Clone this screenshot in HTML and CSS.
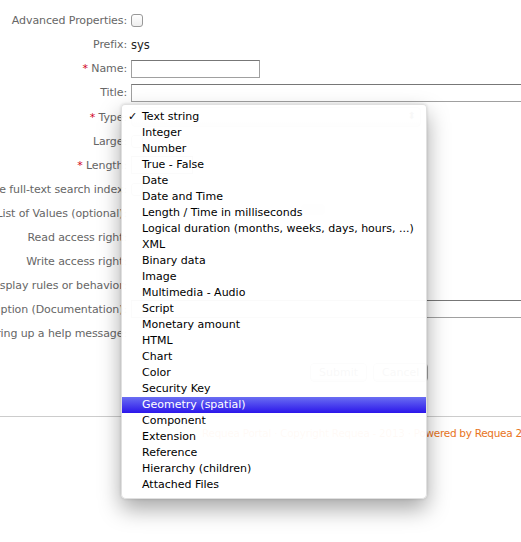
FILE: index.html
```html
<!DOCTYPE html>
<html>
<head>
<meta charset="utf-8">
<link rel="stylesheet" href="styles.css">
</head>
<body>
<div class="page">
  <form class="form">
    <div class="row r-adv"><div class="lbl">Advanced Properties:</div><div class="fld"><span class="check"></span></div></div>
    <div class="row r-prefix"><div class="lbl">Prefix:</div><div class="fld"><span class="val">sys</span></div></div>
    <div class="row r-name"><div class="lbl"><span class="req">*</span>&nbsp;Name:</div><div class="fld"><span class="input name-input"></span></div></div>
    <div class="row r-title"><div class="lbl">Title:</div><div class="fld"><span class="input wide-input"></span></div></div>
    <div class="row"><div class="lbl"><span class="req">*</span>&nbsp;Type:</div><div class="fld"><span class="select"><span class="arrow">⬍</span></span></div></div>
    <div class="row"><div class="lbl">Large:</div><div class="fld"><span class="check"></span></div></div>
    <div class="row"><div class="lbl"><span class="req">*</span>&nbsp;Length:</div><div class="fld"><span class="input short-input"></span></div></div>
    <div class="row"><div class="lbl">Enable full-text search index:</div><div class="fld"><span class="check"></span></div></div>
    <div class="row"><div class="lbl">List of Values (optional):</div><div class="fld"><span class="lov-box"></span></div></div>
    <div class="row"><div class="lbl">Read access right:</div><div class="fld"></div></div>
    <div class="row"><div class="lbl">Write access right:</div><div class="fld"></div></div>
    <div class="row"><div class="lbl">Display rules or behavior:</div><div class="fld"></div></div>
    <div class="row"><div class="lbl">Description (Documentation):</div><div class="fld"><span class="input wide-input"></span></div></div>
    <div class="row"><div class="lbl">Bring up a help message:</div><div class="fld"></div></div>
    <div class="buttons"><span class="btn">Submit</span><span class="btn">Cancel</span></div>
  </form>
  <hr class="rule">
  <div class="footer">Requea Portal · Copyright Requea - 2013 · Powered by Requea 2.4</div>

  <ul class="menu">
    <li><span class="tick">✓</span>Text string</li>
    <li>Integer</li>
    <li>Number</li>
    <li>True - False</li>
    <li>Date</li>
    <li>Date and Time</li>
    <li>Length / Time in milliseconds</li>
    <li>Logical duration (months, weeks, days, hours, ...)</li>
    <li>XML</li>
    <li>Binary data</li>
    <li>Image</li>
    <li>Multimedia - Audio</li>
    <li>Script</li>
    <li>Monetary amount</li>
    <li>HTML</li>
    <li>Chart</li>
    <li>Color</li>
    <li>Security Key</li>
    <li class="active">Geometry (spatial)</li>
    <li>Component</li>
    <li>Extension</li>
    <li>Reference</li>
    <li>Hierarchy (children)</li>
    <li>Attached Files</li>
  </ul>
</div>
</body>
</html>
```

FILE: styles.css
```css
html, body {
  margin: 0;
  padding: 0;
  background: #fff;
  overflow: hidden;
}
body {
  font-family: "DejaVu Sans", Verdana, sans-serif;
  font-size: 11px;
  color: #333;
  width: 521px;
  height: 542px;
}
.page {
  position: relative;
  width: 521px;
  height: 542px;
  overflow: hidden;
}
.form {
  display: flex;
  flex-direction: column;
  padding-top: 8px;
}
.row {
  display: flex;
  align-items: center;
  height: 24px;
}
.r-adv { height: 24px; }
.r-prefix { height: 25px; }
.r-name { height: 23px; }
.r-title { height: 25px; }
.lbl {
  width: 127px;
  flex: none;
  display: flex;
  justify-content: flex-end;
  white-space: nowrap;
  color: #666;
  letter-spacing: -0.1px;
}
.req { color: #d0021b; }
.fld {
  flex: 1;
  padding-left: 4px;
  display: flex;
  align-items: center;
  white-space: nowrap;
}
.val { color: #222; font-size: 11.5px; }
.check {
  display: inline-block;
  width: 10px;
  height: 11px;
  border: 1px solid #999;
  border-radius: 3px;
  background: linear-gradient(#fff, #eee);
}
.input {
  display: inline-block;
  height: 16px;
  border: 1px solid #a0a0a0;
  border-top-color: #777;
  background: #fff;
}
.name-input { width: 127px; }
.wide-input { width: 430px; }
.short-input { width: 60px; }
.lov-box {
  display: inline-block;
  margin-left: 170px;
  margin-top: -8px;
  width: 24px;
  height: 11px;
  border-radius: 3px;
  background: #ddd;
}
.select {
  position: relative;
  display: inline-block;
  width: 288px;
  height: 18px;
  border: 1px solid #bbb;
  border-radius: 4px;
  background: linear-gradient(#fbfbfb, #e4e4e4);
}
.arrow {
  position: absolute;
  right: 4px;
  top: 2px;
  font-size: 10px;
  color: #555;
}
.buttons {
  display: flex;
  gap: 6px;
  padding-left: 310px;
  margin-top: 18px;
}
.btn {
  display: inline-block;
  padding: 1px 8px;
  height: 15px;
  line-height: 15px;
  border: 1px solid #aaa;
  border-radius: 4px;
  color: #555;
  background: linear-gradient(#fff, #e6e6e6);
}
.rule {
  margin: 34px 0 0 0;
  border: 0;
  border-top: 1px solid #ccc;
  height: 0;
}
.footer {
  padding-left: 202px;
  margin-top: 10px;
  color: #e8741c;
  font-size: 10.5px;
  letter-spacing: -0.3px;
  white-space: nowrap;
}
.menu {
  position: absolute;
  left: 121px;
  top: 104px;
  width: 304px;
  height: 389px;
  margin: 0;
  padding: 4px 0 0 0;
  list-style: none;
  background: rgba(255, 255, 255, 0.96);
  border: 1px solid rgba(0, 0, 0, 0.12);
  border-radius: 4px 4px 5px 5px;
  box-shadow: 0 10px 22px rgba(0, 0, 0, 0.35), 0 0 3px rgba(0, 0, 0, 0.15);
  box-sizing: content-box;
}
.menu li {
  position: relative;
  height: 16px;
  line-height: 16px;
  padding-left: 20px;
  color: #000;
  font-size: 11px;
  white-space: nowrap;
}
.menu li.active {
  color: #fff;
  background: linear-gradient(#6a6ef2, #2b16ea);
}
.tick {
  position: absolute;
  left: 6px;
  top: 0;
}
```
